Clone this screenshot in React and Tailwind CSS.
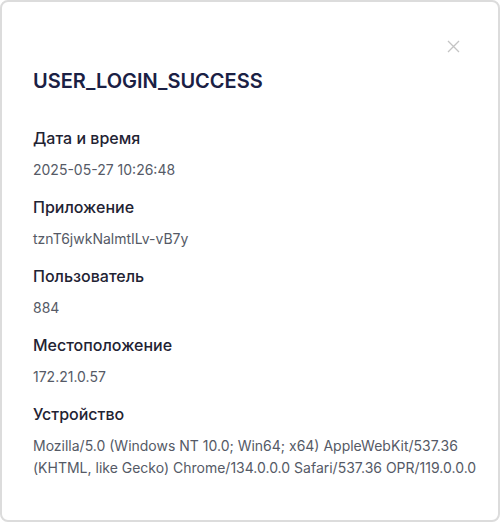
import React from "react";

const rows = [
  ["Дата и время", "2025-05-27 10:26:48"],
  ["Приложение", "tznT6jwkNalmtILv-vB7y"],
  ["Пользователь", "884"],
  ["Местоположение", "172.21.0.57"],
  [
    "Устройство",
    "Mozilla/5.0 (Windows NT 10.0; Win64; x64) AppleWebKit/537.36 (KHTML, like Gecko) Chrome/134.0.0.0 Safari/537.36 OPR/119.0.0.0",
  ],
];

export default function App() {
  return (
    <div className="w-[500px] h-[525px] bg-white" style={{ fontFamily: "Inter, 'Noto Sans', sans-serif" }}>
      <div className="relative w-[500px] h-[522px] border-2 border-[#dcdcdc] rounded-lg bg-white pl-[31px] pr-[14px] pt-[67px]">
        <button className="absolute right-[38px] top-[38px] w-[13px] h-[13px] text-[#c4c4c4]">
          <svg viewBox="0 0 13 13" width="13" height="13" fill="none" stroke="currentColor" strokeWidth="1.3">
            <path d="M1 1L12 12M12 1L1 12" />
          </svg>
        </button>
        <h2 className="text-[20px] leading-[24px] font-semibold text-[#1a2044]">USER_LOGIN_SUCCESS</h2>
        <div className="mt-[34px] flex flex-col gap-[15px]">
          {rows.map(([label, value]) => (
            <div key={label} className="flex flex-col gap-[10px]">
              <div className="text-[16px] leading-[22px] font-medium text-[#1f2333]">{label}</div>
              <div className="text-[14px] leading-[22px] text-[#555a66]">{value}</div>
            </div>
          ))}
        </div>
      </div>
    </div>
  );
}
